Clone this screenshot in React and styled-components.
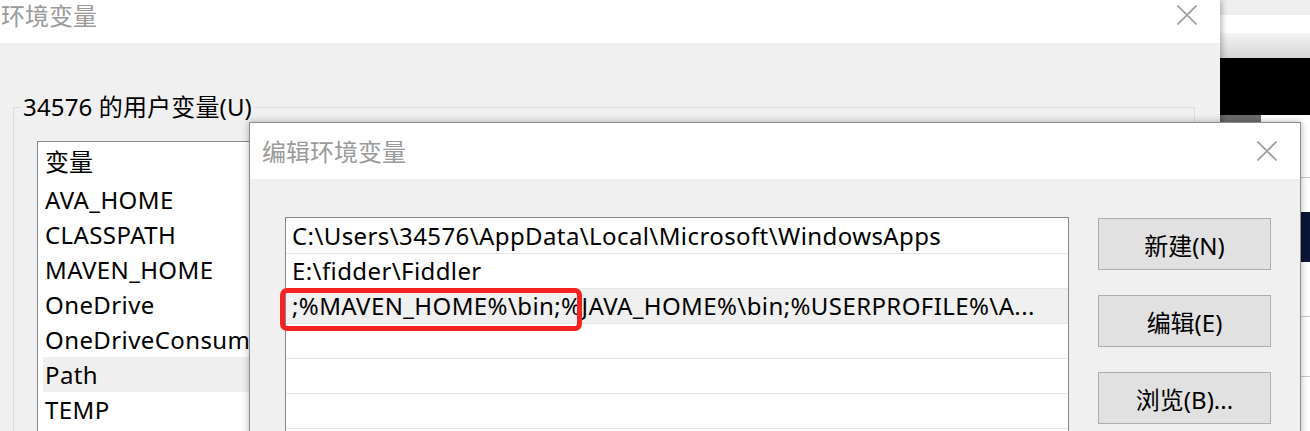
import React from "react";
import styled, { createGlobalStyle } from "styled-components";

const GlobalStyle = createGlobalStyle`
  html, body { margin: 0; padding: 0; background: #fff; }
  body {
    width: 1310px; height: 431px; overflow: hidden;
    font-family: "Noto Sans", "Noto Sans CJK SC", sans-serif;
    color: #000;
  }
  * { box-sizing: border-box; }
`;

const Desktop = styled.div`
  position: relative;
  width: 1310px;
  height: 431px;
  overflow: hidden;
  display: flex;
  background: #fff;
`;

const Window = styled.section`
  width: 1220px;
  flex: none;
  display: flex;
  flex-direction: column;
  background: #f0f0f0;
  position: relative;
  z-index: 1;
  box-shadow: 2px 0 6px rgba(0, 0, 0, 0.28);
`;

const TitleBar = styled.header`
  flex: none;
  height: ${(p) => p.$h}px;
  background: #fff;
  display: flex;
  align-items: ${(p) => p.$align || "center"};
  justify-content: space-between;
  padding: 0 ${(p) => p.$padR}px 0 ${(p) => p.$padL}px;
`;

const Title = styled.h1`
  margin: 0;
  font-size: 24px;
  line-height: 30px;
  font-weight: 400;
  color: #9a9a9a;
  font-family: "Noto Sans CJK SC", sans-serif;
`;

const CloseBtn = styled.button`
  border: 0;
  padding: 0;
  background: transparent;
  width: 20px;
  height: 20px;
  margin-top: ${(p) => p.$mt || 0}px;
  display: block;
  svg { display: block; }
`;

const CloseIcon = ({ mt }) => (
  <CloseBtn $mt={mt} aria-label="close">
    <svg width="20" height="20" viewBox="0 0 20 20">
      <path d="M0.5 0.5 L19.5 19.5 M19.5 0.5 L0.5 19.5" stroke="#9c9c9c" strokeWidth="1.6" fill="none" />
    </svg>
  </CloseBtn>
);

const EnvBody = styled.div`
  flex: 1;
  padding: 49px 25px 0 13px;
  overflow: hidden;
`;

const Group = styled.fieldset`
  margin: 0;
  padding: 0;
  min-width: 0;
  height: 400px;
  border: 1px solid #dcdcdc;
`;

const Legend = styled.legend`
  margin-left: 6px;
  padding: 0 3px;
  font-size: 24px;
  line-height: 30px;
  letter-spacing: 0.15px;
`;

const VarList = styled.div`
  margin: 19px 0 0 23px;
  width: 800px;
  height: 400px;
  background: #fff;
  border: 1px solid #828790;
`;

const VarHeader = styled.div`
  height: 40px;
  line-height: 40px;
  padding-left: 7px;
  font-size: 24px;
`;

const VarRow = styled.div`
  height: 35px;
  line-height: 35px;
  margin-left: 5px;
  padding-left: 2px;
  font-size: 24px;
  letter-spacing: 0.4px;
  background: ${(p) => (p.$selected ? "#efefef" : "transparent")};
  white-space: nowrap;
`;

const SideStrip = styled.div`
  flex: 1;
  display: flex;
  flex-direction: column;
  background: #fff;
`;

const Band = styled.div`
  flex: none;
  height: ${(p) => p.$h}px;
  background: ${(p) => p.$bg};
  border-bottom: ${(p) => (p.$line ? "1px solid #c8c8c8" : "0")};
`;

const SplitBand = styled.div`
  flex: none;
  height: ${(p) => p.$h}px;
  display: flex;
`;

const GreyTab = styled.div`
  width: 41px;
  background: #6d6d6d;
`;

const Dialog = styled.section`
  position: absolute;
  left: 249px;
  top: 122px;
  width: 1052px;
  height: 330px;
  z-index: 2;
  display: flex;
  flex-direction: column;
  background: #f0f0f0;
  border: 1px solid #8c8c8c;
  box-shadow: 0 0 7px rgba(0, 0, 0, 0.3);
`;

const DialogBody = styled.div`
  flex: 1;
  display: flex;
  align-items: flex-start;
  gap: 29px;
  padding: 38px 0 0 35px;
`;

const PathWrap = styled.div`
  position: relative;
  width: 784px;
  flex: none;
`;

const PathList = styled.div`
  height: 260px;
  background: #fff;
  border: 1px solid #828790;
  padding-top: 1px;
`;

const PathRow = styled.div`
  height: 35px;
  line-height: 34px;
  padding-left: 6px;
  font-size: 24px;
  letter-spacing: 0.4px;
  white-space: nowrap;
  overflow: hidden;
  border-bottom: 1px solid #e6e6e6;
  background: ${(p) => (p.$selected ? "#f0f0f0" : "#fff")};
`;

const Highlight = styled.div`
  position: absolute;
  left: -5px;
  top: 71px;
  width: 302px;
  height: 43px;
  border: 5px solid #f52222;
  border-radius: 7px;
  pointer-events: none;
`;

const Buttons = styled.div`
  display: flex;
  flex-direction: column;
  gap: 25px;
  margin-top: 1px;
`;

const Button = styled.button`
  width: 173px;
  height: 52px;
  background: #e1e1e1;
  border: 1px solid #adadad;
  font-family: "Noto Sans", "Noto Sans CJK SC", sans-serif;
  font-size: 24px;
  color: #000;
  padding: 0;
`;

const vars = ["AVA_HOME", "CLASSPATH", "MAVEN_HOME", "OneDrive", "OneDriveConsumer", "Path", "TEMP"];

const paths = [
  "C:\\Users\\34576\\AppData\\Local\\Microsoft\\WindowsApps",
  "E:\\fidder\\Fiddler",
  ";%MAVEN_HOME%\\bin;%JAVA_HOME%\\bin;%USERPROFILE%\\A...",
  "",
  "",
  "",
  "",
];

export default function App() {
  return (
    <Desktop>
      <GlobalStyle />
      <Window>
        <TitleBar $h={43} $padL={1} $padR={23} $align="flex-start">
          <Title>环境变量</Title>
          <CloseIcon mt={5} />
        </TitleBar>
        <EnvBody>
          <Group>
            <Legend>34576 的用户变量(U)</Legend>
            <VarList>
              <VarHeader>变量</VarHeader>
              {vars.map((v) => (
                <VarRow key={v} $selected={v === "Path"}>{v}</VarRow>
              ))}
            </VarList>
          </Group>
        </EnvBody>
      </Window>
      <SideStrip>
        <Band $h={15} $bg="#eeeeee" />
        <Band $h={18} $bg="#ffffff" />
        <Band $h={25} $bg="linear-gradient(#f4f4f4, #d6d6d6)" />
        <Band $h={57} $bg="#000000" />
        <SplitBand $h={7}>
          <GreyTab />
        </SplitBand>
        <Band $h={56} $bg="#ffffff" $line />
        <Band $h={34} $bg="#ffffff" />
        <Band $h={50} $bg="#0b1535" />
        <Band $h={55} $bg="#ffffff" $line />
        <Band $h={60} $bg="#ffffff" $line />
      </SideStrip>
      <Dialog>
        <TitleBar $h={56} $padL={12} $padR={23}>
          <Title>编辑环境变量</Title>
          <CloseIcon />
        </TitleBar>
        <DialogBody>
          <PathWrap>
            <PathList>
              {paths.map((p, i) => (
                <PathRow key={i} $selected={i === 2}>{p}</PathRow>
              ))}
            </PathList>
            <Highlight />
          </PathWrap>
          <Buttons>
            <Button>新建(N)</Button>
            <Button>编辑(E)</Button>
            <Button>浏览(B)...</Button>
          </Buttons>
        </DialogBody>
      </Dialog>
    </Desktop>
  );
}
